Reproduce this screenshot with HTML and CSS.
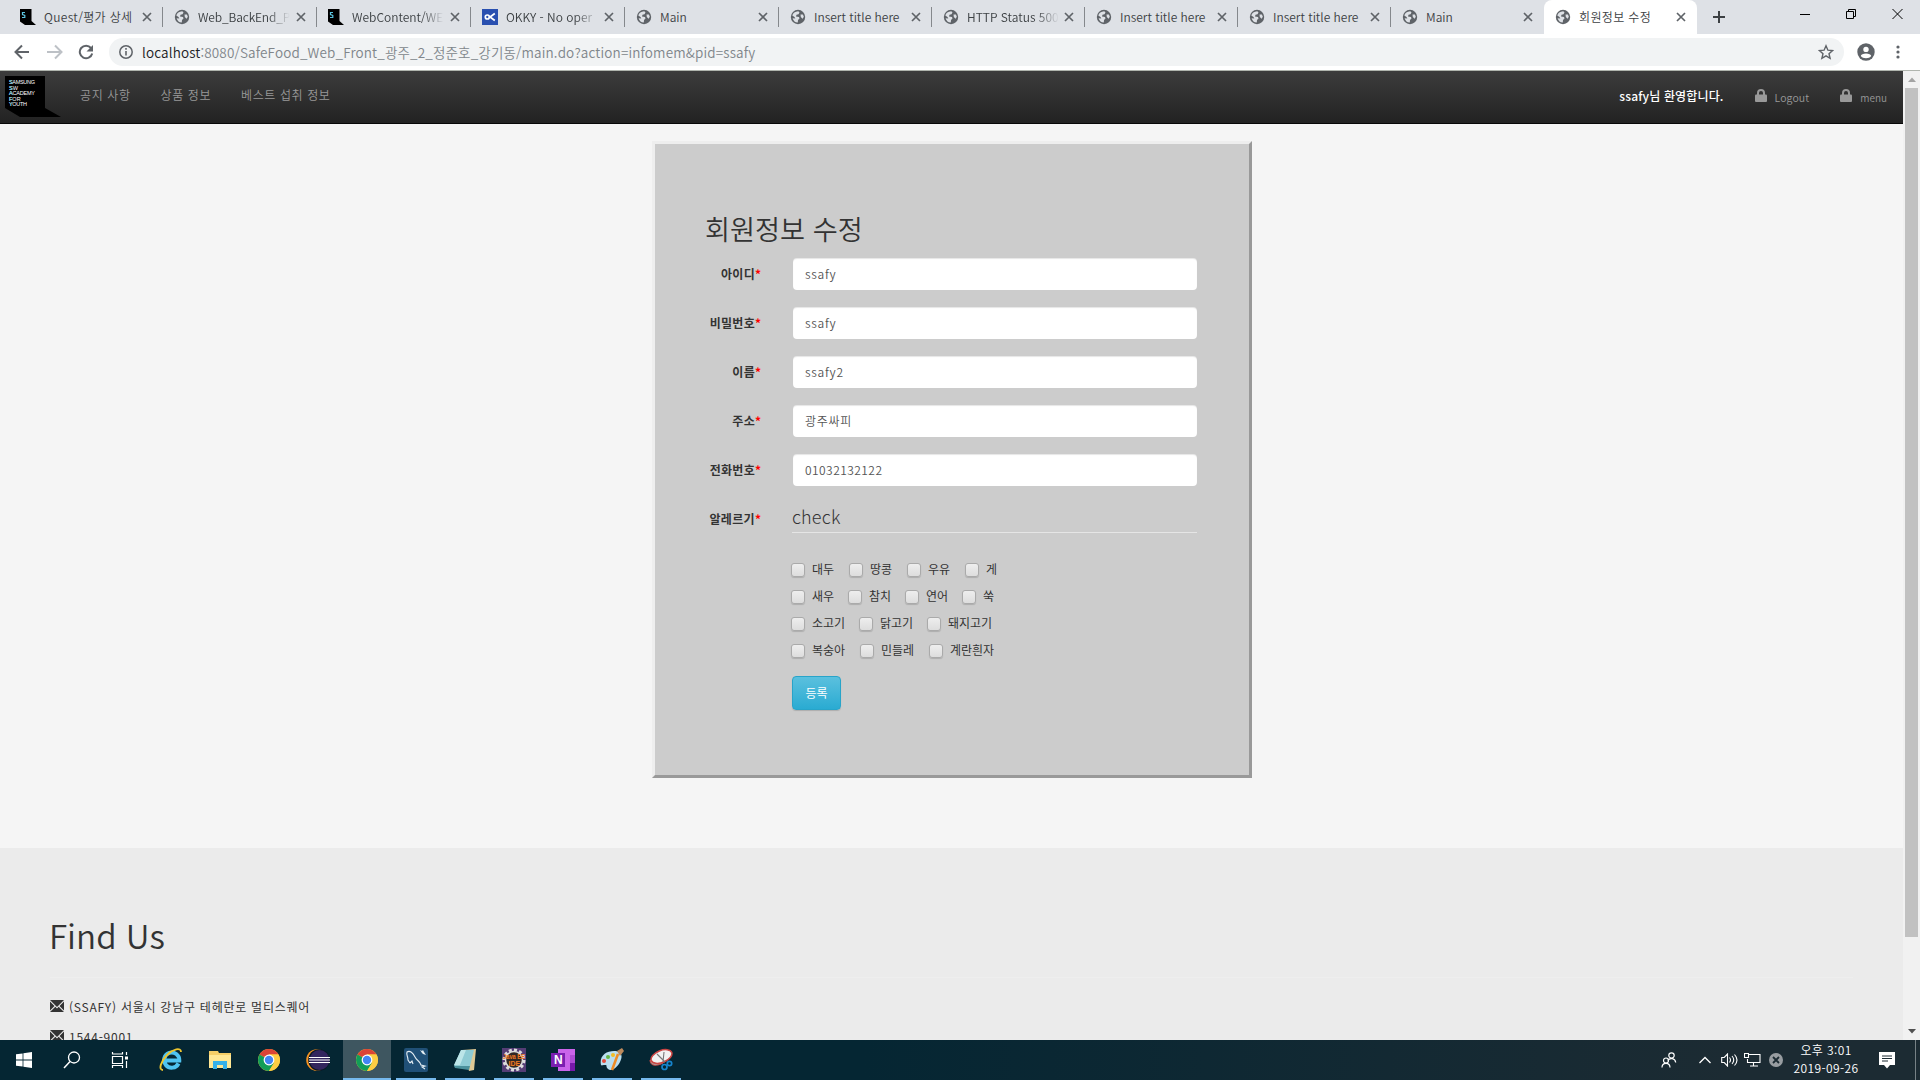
FILE: index.html
```html
<!DOCTYPE html>
<html lang="ko">
<head>
<meta charset="utf-8">
<title>회원정보 수정</title>
<link rel="stylesheet" href="styles.css">
</head>
<body>
<svg class="defs" width="0" height="0">
  <symbol id="globe" viewBox="0 0 16 16"><circle cx="8" cy="8" r="7.2" fill="#5f6368"/><path d="M2.3 6.5C3 4 5 2.5 8.300 2.300L9.500 3.500 8.500 5.200 6.500 5.800 6 7.500 9 8 9.500 9.500 8 11 7.800 13.600C5 13.600 3.500 11.800 2.600 9.200L5.300 9.500 4.500 8z" fill="#dee1e6"/><path d="M10.500 5.500l2.400 0 .9 2.200-1.200 2-1.800-1.600z" fill="#dee1e6"/></symbol>
  <symbol id="ssafy" viewBox="0 0 16 16"><path d="M0 0h11.500v12l4.500 4H5l-5-3.500z" fill="#000"/><path d="M5 3.500H2.500v2l2.300 1v2H2" fill="none" stroke="#5cc5e0" stroke-width="1.200"/></symbol>
  <symbol id="okky" viewBox="0 0 16 16"><path d="M0 0h16v16H0z" fill="#2a50b0"/><circle cx="5.300" cy="8" r="2" fill="none" stroke="#fff" stroke-width="1.700"/><path d="M12.800 4.500 8 8l4.800 3.500" fill="none" stroke="#fff" stroke-width="1.700"/></symbol>
  <symbol id="x" viewBox="0 0 10 10"><path d="M1 1l8 8M9 1l-8 8" stroke="#5f6368" stroke-width="1.700"/></symbol>
  <symbol id="lock" viewBox="0 0 12 14"><path d="M3 7V4a3 3 0 0 1 6 0v3" fill="none" stroke="#999" stroke-width="2"/><rect y="5.500" width="12" height="7.500" rx="1" fill="#999"/></symbol>
  <symbol id="mail" viewBox="0 0 14 12"><path d="M0 0h14L7 7zM0 1.500 4.500 6 0 10.500zM14 1.500 9.500 6l4.500 4.500zM0 12l5.300-5.200L7 8.500l1.700-1.700L14 12z" fill="#333"/></symbol>
  <symbol id="chrome" viewBox="0 0 24 24"><circle cx="12" cy="12" r="11" fill="#fbc934"/><path d="M12 12 2.500 6.500A11 11 0 0 1 21.500 6.500H12z" fill="#db4437"/><path d="M2.500 6.500A11 11 0 0 0 12 23l5-8.200-5-2.800z" fill="#129d58"/><path d="M12 6.500h9.500A11 11 0 0 1 12 23l5-8z" fill="#fdcd43"/><circle cx="12" cy="12" r="5.400" fill="#fff"/><circle cx="12" cy="12" r="4.200" fill="#4285f4"/></symbol>
</svg>

<header class="tabs">
  <div class="tab wide"><svg class="fav"><use href="#ssafy"/></svg><span class="tt ko">Quest/평가 상세</span><svg class="x"><use href="#x"/></svg></div>
  <div class="tab wide"><svg class="fav"><use href="#globe"/></svg><span class="tt fade snug">Web_BackEnd_P</span><svg class="x"><use href="#x"/></svg></div>
  <div class="tab wide"><svg class="fav"><use href="#ssafy"/></svg><span class="tt fade">WebContent/WE</span><svg class="x"><use href="#x"/></svg></div>
  <div class="tab wide"><svg class="fav"><use href="#okky"/></svg><span class="tt fade">OKKY - No oper</span><svg class="x"><use href="#x"/></svg></div>
  <div class="tab wide"><svg class="fav"><use href="#globe"/></svg><span class="tt">Main</span><svg class="x"><use href="#x"/></svg></div>
  <div class="tab"><svg class="fav"><use href="#globe"/></svg><span class="tt">Insert title here</span><svg class="x"><use href="#x"/></svg></div>
  <div class="tab"><svg class="fav"><use href="#globe"/></svg><span class="tt fade">HTTP Status 500</span><svg class="x"><use href="#x"/></svg></div>
  <div class="tab"><svg class="fav"><use href="#globe"/></svg><span class="tt">Insert title here</span><svg class="x"><use href="#x"/></svg></div>
  <div class="tab"><svg class="fav"><use href="#globe"/></svg><span class="tt">Insert title here</span><svg class="x"><use href="#x"/></svg></div>
  <div class="tab last"><svg class="fav"><use href="#globe"/></svg><span class="tt">Main</span><svg class="x"><use href="#x"/></svg></div>
  <div class="tab active"><svg class="fav"><use href="#globe"/></svg><span class="tt ko">회원정보 수정</span><svg class="x"><use href="#x"/></svg></div>
  <svg class="plus" width="12" height="12"><path d="M6 0v12M0 6h12" stroke="#3c4043" stroke-width="2"/></svg>
  <div class="winctl">
    <svg width="10" height="12"><path d="M0 6.500h10" stroke="#000"/></svg>
    <svg width="10" height="12"><path d="M.5 3.500h7v7h-7zM2.500 3V1.500h7v7H8" fill="none" stroke="#000"/></svg>
    <svg width="11" height="12"><path d="M.5 1l10 10M10.500 1l-10 10" stroke="#000"/></svg>
  </div>
</header>

<div class="toolbar">
  <svg class="back" width="16" height="16"><path d="M15 8H2M8 1.500 1.500 8 8 14.500" fill="none" stroke="#5f6368" stroke-width="2"/></svg>
  <svg class="fwd" width="16" height="16"><path d="M0 8h13M8 1.500 14.500 8 8 14.500" fill="none" stroke="#bdc1c6" stroke-width="2"/></svg>
  <svg class="reload" width="16" height="16"><path d="M13 4A6.300 6.300 0 1 0 14.200 9.500" fill="none" stroke="#5f6368" stroke-width="2"/><path d="M15 1v6.500H8.500z" fill="#5f6368"/></svg>
  <div class="omni">
    <svg width="14" height="14"><circle cx="7" cy="7" r="6.200" fill="none" stroke="#5f6368" stroke-width="1.500"/><path d="M7 6v4.500M7 3v1.700" stroke="#5f6368" stroke-width="1.600"/></svg>
    <span class="url"><b>localhost</b>:8080/SafeFood_Web_Front_광주_2_정준호_강기동/main.do?action=infomem&amp;pid=ssafy</span>
    <svg class="star" width="16" height="16"><path d="M8 1.800l1.900 4.400 4.700.4-3.600 3.100 1.100 4.600L8 11.800l-4.100 2.500L5 9.700 1.400 6.600l4.700-.4z" fill="none" stroke="#5f6368" stroke-width="1.400"/></svg>
  </div>
  <svg class="user" width="18" height="18"><circle cx="9" cy="9" r="8.700" fill="#5f6368"/><circle cx="9" cy="6.400" r="2.700" fill="#fff"/><path d="M3.800 13c0-3.500 10.400-3.500 10.400 0-2 3-8.400 3-10.400 0z" fill="#fff"/></svg>
  <svg class="dots" width="4" height="14"><g fill="#5f6368"><circle cx="2" cy="2" r="1.600"/><circle cx="2" cy="7" r="1.600"/><circle cx="2" cy="12" r="1.600"/></g></svg>
</div>

<div class="view">
  <div class="page">
    <nav class="nav">
      <svg class="logo" width="56" height="42" viewBox="0 0 56 42"><path d="M0 0h40v32l16 9H15L0 32z" fill="#000"/><g class="logotext"><text x="4" y="8" textLength="26">SAMSUNG</text><text x="4" y="13.500">SW</text><text x="4" y="19" textLength="26">ACADEMY</text><text x="4" y="24.500">FOR</text><text x="4" y="30" textLength="18">YOUTH</text></g><g class="logotext cy"><text x="4" y="8">S</text><text x="4" y="13.500">S</text><text x="4" y="19">A</text><text x="4" y="24.500">F</text><text x="4" y="30">Y</text></g></svg>
      <a class="n1">공지 사항</a><a class="n2">상품 정보</a><a class="n3">베스트 섭취 정보</a>
      <span class="welcome">ssafy님 환영합니다.</span>
      <a class="lk"><svg width="12" height="14"><use href="#lock"/></svg><span>Logout</span></a>
      <a class="lk menu"><svg width="12" height="14"><use href="#lock"/></svg><span>menu</span></a>
    </nav>
    <main class="card">
      <h2>회원정보 수정</h2>
      <div class="row"><label>아이디<i>*</i></label><div class="in">ssafy</div></div>
      <div class="row"><label>비밀번호<i>*</i></label><div class="in">ssafy</div></div>
      <div class="row"><label>이름<i>*</i></label><div class="in">ssafy2</div></div>
      <div class="row"><label>주소<i>*</i></label><div class="in">광주싸피</div></div>
      <div class="row"><label>전화번호<i>*</i></label><div class="in num">01032132122</div></div>
      <div class="row"><label>알레르기<i>*</i></label><div class="legend">check</div></div>
      <div class="checks">
        <div><span>대두</span><span>땅콩</span><span>우유</span><span>게</span></div>
        <div class="tight"><span>새우</span><span>참치</span><span>연어</span><span>쑥</span></div>
        <div class="tight"><span>소고기</span><span>닭고기</span><span>돼지고기</span></div>
        <div><span>복숭아</span><span>민들레</span><span>계란흰자</span></div>
      </div>
      <button class="btn">등록</button>
    </main>
    <footer class="foot">
      <h1>Find Us</h1>
      <hr>
      <p><svg width="14" height="12"><use href="#mail"/></svg><span>(SSAFY) 서울시 강남구 테헤란로 멀티스퀘어</span></p>
      <p><svg width="14" height="12"><use href="#mail"/></svg><span>1544-9001</span></p>
    </footer>
  </div>
  <div class="scroll">
    <svg width="17" height="17"><path d="M5 11h8L9 6.500z" fill="#a3a3a3"/></svg>
    <div class="thumb"></div>
    <svg class="dn" width="17" height="17"><path d="M5 6h8l-4 4.500z" fill="#505050"/></svg>
  </div>
</div>

<div class="task">
  <div class="ti sys"><svg viewBox="0 0 16 16" width="16" height="16"><path d="M0 2.300 6.600 1.400v6.200H0zM7.400 1.300 16 0v7.600H7.400zM0 8.400h6.600v6.200L0 13.700zM7.400 8.400H16V16l-8.600-1.300z" fill="#fff"/></svg></div>
  <div class="ti sys"><svg width="18" height="18"><circle cx="11" cy="6.500" r="5.500" fill="none" stroke="#fff" stroke-width="1.300"/><path d="M7 10.500 1 17" stroke="#fff" stroke-width="1.500"/></svg></div>
  <div class="ti sys"><svg width="18" height="16"><path d="M1.500 4.500h10v7h-10zM1.500 0v2h10V0M1.500 16v-2.500h10V16M15.500 0v3M15.500 9v7" fill="none" stroke="#fff" stroke-width="1.200"/><path d="M14 4.500h3v3h-3z" fill="#fff"/></svg></div>
  <div class="ti ie"><svg width="24" height="24"><path d="M19.500 15.500A7.600 7.600 0 1 1 20.300 12.500H6" fill="none" stroke="#4fc3f0" stroke-width="4"/><path d="M4 22C-1 22 2 13 8 7S22-1 22 4" fill="none" stroke="#edc52e" stroke-width="1.900"/></svg></div>
  <div class="ti"><svg width="22" height="20"><path d="M0 1h9l1 2h12v15H0z" fill="#f5ce67"/><path d="M0 5h22v13H0z" fill="#ffe794"/><path d="M4 19v-8h14v8h-4v-4H8v4z" fill="#37b1e8"/></svg></div>
  <div class="ti"><svg width="24" height="24"><use href="#chrome"/></svg></div>
  <div class="ti"><svg width="24" height="24"><circle cx="11" cy="12" r="10.800" fill="#f69320"/><circle cx="13" cy="12" r="10.800" fill="#0b1826"/><circle cx="13.500" cy="12" r="9.900" fill="#33255e"/><path d="M3 9.500h21M3 12h21M3 14.500h21" stroke="#fff" stroke-width="1.200"/></svg></div>
  <div class="ti on sel"><svg width="24" height="24"><use href="#chrome"/></svg></div>
  <div class="ti on"><svg width="24" height="24"><rect width="24" height="24" rx="2" fill="#205077"/><path d="M6 15 4 12C4 8 2 7 3 4c3-2 6 1 8 5s5 4 6 8l4 1-3 1 3 2M6 15l2-2 1 3" fill="none" stroke="#e4edf3" stroke-width="1.100"/><path d="M16 2l2 1 1-1 1 2 2 3-3-1-1-1z" fill="#e4edf3"/></svg></div>
  <div class="ti on"><svg width="24" height="24"><path d="M9 2l14-1-2 21-5 1z" fill="#dec995"/><path d="M8 2h13l-4 16H1z" fill="#8ecbd4"/><path d="M1 18h16l-1 4L2 20z" fill="#4b919c"/><path d="M8 2h5L7 17H1z" fill="#bce5e8"/></svg></div>
  <div class="ti on"><svg width="24" height="24"><path d="M0 0h24v24H0z" fill="#543d75"/><circle cx="12" cy="12" r="10" fill="none" stroke="#ddd" stroke-width="3" stroke-dasharray="3 2.200"/><circle cx="12" cy="12" r="8.500" fill="#302824" stroke="#ddd" stroke-width="1.500"/><text class="jee" x="1" y="11" textLength="22" lengthAdjust="spacingAndGlyphs">Java EE</text><text class="jee" x="6.500" y="18">IDE</text></svg></div>
  <div class="ti on"><svg width="24" height="24"><path d="M7 1h17v22H7z" fill="#ca64ea"/><path d="M19 7h5v8h-5z" fill="#ae4bd5"/><path d="M19 15h5v8h-5z" fill="#7719aa"/><path d="M0 5h14v14H0z" fill="#7b1fb0"/><text class="on-n" x="3" y="16">N</text></svg></div>
  <div class="ti on"><svg width="24" height="24"><path d="M1 17C-1 8 6 3 14 3s9 5 6 11-9 10-12 7 0-4-3-4-3 1-4 0z" fill="#b9def0"/><circle cx="4" cy="13" r="2" fill="#e34b3b"/><circle cx="8" cy="9" r="2" fill="#64b645"/><circle cx="13" cy="7" r="2" fill="#f3bd25"/><path d="M18 6 12 22" stroke="#ef8c25" stroke-width="2.500"/><path d="M17 3l5-3 2 3-4 5z" fill="#bd8a5d"/></svg></div>
  <div class="ti on"><svg width="24" height="24"><path d="M1 12c0 7 8 6 13 3l6-5" fill="#aaa" stroke="#cb4543"/><ellipse cx="12.500" cy="8.500" rx="11" ry="6" transform="rotate(-22 12.500 8.500)" fill="#f2f2f2" stroke="#cb4543" stroke-width="1.500"/><path d="M8 6l8 8M15 4l-1 10" stroke="#777" stroke-width="1.100"/><circle cx="15.500" cy="19" r="2.500" fill="none" stroke="#1684ce" stroke-width="1.700"/><circle cx="20.500" cy="15.500" r="2.200" fill="none" stroke="#1684ce" stroke-width="1.700"/></svg></div>
  <div class="tray">
    <svg class="ppl" width="16" height="16"><g fill="none" stroke="#fff" stroke-width="1.200"><circle cx="10.500" cy="3.500" r="2.700"/><path d="M6.700 8.500c2-3 7.500-2.500 8 2"/><circle cx="5" cy="8.500" r="2.500"/><path d="M1 15.500c0-5.500 8-5.500 8 0"/></g></svg>
    <svg class="chev" width="12" height="8"><path d="M.5 7 6 1.500 11.500 7" fill="none" stroke="#fff" stroke-width="1.300"/></svg>
    <svg class="spk" width="17" height="14"><path d="M.7 4.500h2.500L6.500 1v12L3.200 9.500H.7zM8.500 4.500q2 2.500 0 5M11 3q3.500 4 0 8M13.500 1.500q5 5.500 0 11" fill="none" stroke="#fff" stroke-width="1.100"/></svg>
    <svg class="net" width="17" height="14"><path d="M5 1.500h11v8H3.500V6M9.500 10v3M6 13h8M.5.5h4v4h-4z" fill="none" stroke="#fff" stroke-width="1.100"/></svg>
    <svg class="err" width="14" height="14"><circle cx="7" cy="7" r="7" fill="#989da1"/><path d="M4 4l6 6M10 4l-6 6" stroke="#1c2b33" stroke-width="1.800"/></svg>
    <div class="clock"><span>오후 3:01</span><span>2019-09-26</span></div>
    <svg class="note" width="16" height="17"><path d="M0 0h16v13h-5l-3 3.500L5 13H0z" fill="#fff"/><path d="M3 4h10M3 6.500h10M3 9h6" stroke="#1c2b33"/></svg>
    <div class="edge"></div>
  </div>
</div>
</body>
</html>
```
FILE: styles.css
```css
* { box-sizing: border-box; }
body { margin: 0; width: 1920px; height: 1080px; overflow: hidden; display: flex; flex-direction: column; font-family: "Noto Sans CJK KR", sans-serif; font-size: 12px; color: #333; }
svg { display: block; flex: none; }
.defs { position: absolute; }

/* Browser tabs */
.tabs { height: 34px; flex: none; background: #dee1e6; display: flex; align-items: center; padding-left: 9px; }
.tab { width: 153px; height: 34px; flex: none; display: flex; align-items: center; padding: 0 11px; background: linear-gradient(#85888c, #85888c) right 7px / 1px 20px no-repeat; }
.tab.wide { width: 154px; }
.tab.last { background: none; }
.tab.active { background: #fff; border-radius: 8px 8px 0 0; }
.fav { width: 16px; height: 16px; margin-right: 8px; }
.tt { flex: 1; min-width: 0; overflow: hidden; white-space: nowrap; color: #3c4043; line-height: 18px; margin: -1px 5px 0 0; font-weight: 350; }
.ko { letter-spacing: .35px; }
.snug { letter-spacing: -.15px; }
.fade { -webkit-mask-image: linear-gradient(90deg, #000 70px, transparent 92px); mask-image: linear-gradient(90deg, #000 70px, transparent 92px); }
.x { width: 10px; height: 10px; }
.plus { margin-left: 16px; }
.winctl { margin-left: auto; display: flex; gap: 36px; padding-right: 17px; margin-bottom: 6px; }

/* Address bar */
.toolbar { height: 37px; flex: none; background: #fff; border-bottom: 1px solid #b0b5ae; display: flex; align-items: center; padding-left: 14px; }
.fwd { margin-left: 17px; }
.reload { margin-left: 15px; }
.omni { margin-left: 15px; width: 1735px; height: 28px; background: #f1f3f4; border-radius: 14px; display: flex; align-items: center; padding: 0 10px; }
.url { margin: -1px 0 0 9px; font-size: 13.500px; letter-spacing: .15px; color: #80868b; white-space: nowrap; font-weight: 350; }
.url b { font-weight: 350; color: #202124; }
.star { margin-left: auto; }
.user { margin-left: 13px; }
.dots { margin-left: 21px; }

/* Site */
.view { height: 969px; flex: none; display: flex; overflow: hidden; }
.page { width: 1903px; background: #f5f5f5; overflow: hidden; }
.nav { height: 53px; background: linear-gradient(#3c3c3c, #222); border-bottom: 1px solid #080808; display: flex; align-items: center; color: #999; padding: 0 16px 0 5px; }
.nav a { font-weight: 350; }
.logotext { font: 5.500px "Liberation Sans", sans-serif; fill: #fff; }
.cy { fill: #5cc5e0; }
.n1, .n2, .n3 { letter-spacing: .6px; padding-bottom: 5px; }
.n1 { margin-left: 19px; }
.n2, .n3 { margin-left: 30px; }
.welcome { margin-left: auto; color: #fff; font-weight: 500; letter-spacing: .15px; padding-bottom: 4px; }
.lk { display: flex; align-items: center; gap: 8px; margin-left: 31px; font-size: 10.500px; letter-spacing: .1px; }
.menu { font-size: 10px; letter-spacing: 0; }
.lk svg { margin-top: -2px; }
.card { width: 600px; height: 637px; margin: 17px 0 0 652px; background: #ccc; border: 3px solid; border-color: #eee #999 #999 #eee; padding: 64px 52px 0 50px; }
h2 { margin: 0 0 10px; font-size: 27.200px; font-weight: 350; line-height: 40px; }
.row { display: flex; height: 32px; margin-bottom: 17px; align-items: center; }
.row label { width: 56px; font-weight: 700; white-space: nowrap; display: flex; justify-content: flex-end; letter-spacing: .3px; padding-bottom: 2px; }
.row i { color: #f00; font-style: normal; width: 6px; }
.in { margin-left: 32px; width: 404px; height: 32px; background: #fff; border-radius: 4px; padding: 0 12px; line-height: 31px; color: #555; box-shadow: inset 0 1px 1px rgba(0,0,0,.1); font-weight: 350; letter-spacing: .75px; }
.num { letter-spacing: .45px; }
.legend { align-self: flex-start; margin-left: 31px; width: 406px; height: 30px; border-bottom: 1px solid #e5e5e5; font-size: 18px; letter-spacing: .2px; line-height: 26px; font-weight: 300; }
.checks { margin: 20px 0 0 86px; }
.checks div { display: flex; height: 27px; align-items: center; gap: 15px; }
.checks .tight { gap: 14px; }
.checks span { display: flex; align-items: center; line-height: 18px; letter-spacing: -.05px; }
.checks span::before { content: ""; width: 12px; height: 12px; margin: 2px 7px 0 0; border: 1px solid #aaa; border-radius: 3px; background: linear-gradient(#eee, #ddd); box-shadow: 0 1px 1px rgba(0,0,0,.15); }
.btn { display: block; margin: 13px 0 0 87px; width: 49px; height: 34px; padding: 0 0 2px; border: 1px solid #28a4c9; border-radius: 4px; background: linear-gradient(#5bc0de, #2aabd2); color: #fff; font: 12px "Noto Sans CJK KR", sans-serif; box-shadow: 0 1px 1px rgba(0,0,0,.15); }
.foot { margin-top: 70px; height: 300px; background: #ebebeb; padding: 62px 50px 0; }
h1 { margin: 0 0 0 -1px; font: 350 33.200px/50px "Noto Sans CJK KR", sans-serif; }
hr { margin: 17px 0 13px; border: 0; border-top: 1px solid #eee; }
.foot p { margin: 0; height: 30px; display: flex; align-items: center; gap: 5px; white-space: nowrap; letter-spacing: .75px; }
.foot p svg { margin-top: -1px; }
.scroll { width: 17px; background: #f1f1f1; display: flex; flex-direction: column; align-items: center; }
.thumb { width: 13px; height: 849px; background: #c1c1c1; }
.dn { margin-top: auto; }

/* Taskbar */
.task { height: 40px; flex: none; background: linear-gradient(90deg, #052633, #052633 45%, #1c2b33 90%); display: flex; color: #fff; }
.ti { width: 49px; height: 40px; display: flex; align-items: center; justify-content: center; flex: none; }
.sys { width: 48px; }
.ie { margin-left: 2px; }
.on { background: linear-gradient(#76b9ed, #76b9ed) center bottom / 40px 2px no-repeat; }
.sel { width: 48px; margin-left: 1px; background: linear-gradient(#76b9ed, #76b9ed) bottom / 100% 2px no-repeat, #3e5660; }
.jee { font: bold 7px "Liberation Sans", sans-serif; fill: #f27a22; }
.on-n { font: bold 12px "Liberation Sans", sans-serif; fill: #fff; }
.tray { margin-left: auto; display: flex; align-items: center; }
.chev { margin-left: 22px; }
.spk { margin-left: 10px; }
.net { margin-left: 6px; }
.err { margin-left: 8px; }
.clock { width: 66px; margin: -2px 0 0 10px; display: flex; flex-direction: column; align-items: center; line-height: 18px; font-weight: 350; letter-spacing: .4px; white-space: nowrap; }
.note { margin-left: 20px; }
.edge { width: 1px; height: 40px; background: #778186; margin: 0 4px 0 20px; }
```
